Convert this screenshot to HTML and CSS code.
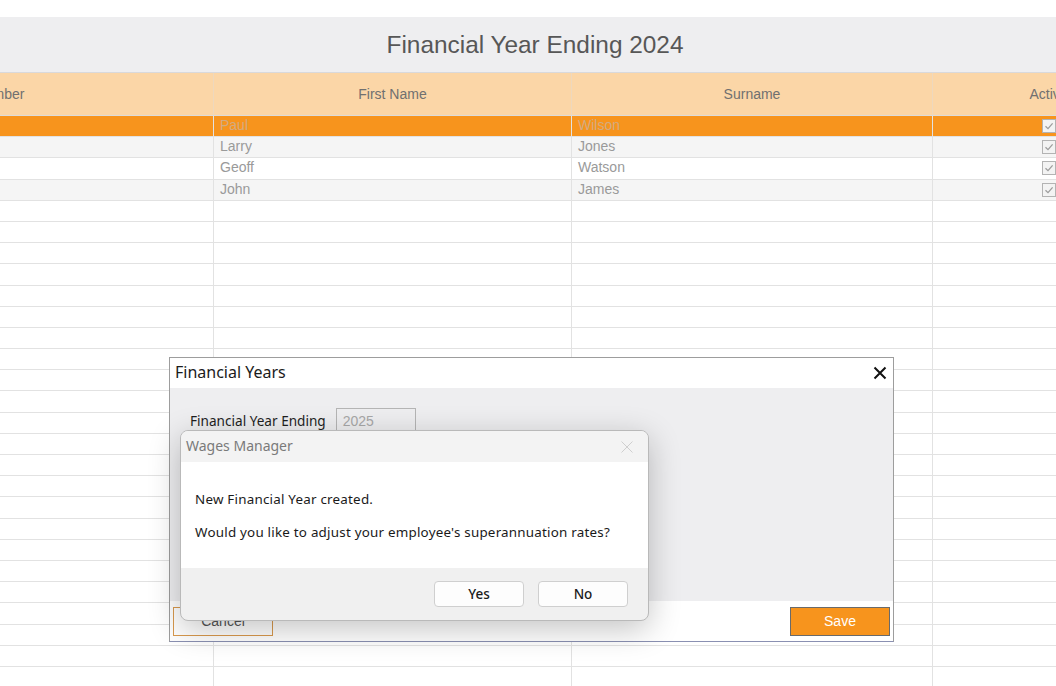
FILE: index.html
```html
<!DOCTYPE html>
<html>
<head>
<meta charset="utf-8">
<link rel="stylesheet" href="styles.css">
</head>
<body>
<div class="app">
  <div class="title-band">Financial Year Ending 2024</div>
  <div class="viewport">
    <div class="grid">
      <div class="row head">
        <div class="cell">Number</div>
        <div class="cell">First Name</div>
        <div class="cell">Surname</div>
        <div class="cell">Active</div>
      </div>
      <div class="row sel">
        <div class="cell"></div><div class="cell">Paul</div><div class="cell">Wilson</div><div class="cell chk"><span class="box"><svg viewBox="0 0 12 12"><path d="M2.5 6.2 L5 8.6 L9.6 3.4" /></svg></span></div>
      </div>
      <div class="row alt">
        <div class="cell"></div><div class="cell">Larry</div><div class="cell">Jones</div><div class="cell chk"><span class="box"><svg viewBox="0 0 12 12"><path d="M2.5 6.2 L5 8.6 L9.6 3.4" /></svg></span></div>
      </div>
      <div class="row">
        <div class="cell"></div><div class="cell">Geoff</div><div class="cell">Watson</div><div class="cell chk"><span class="box"><svg viewBox="0 0 12 12"><path d="M2.5 6.2 L5 8.6 L9.6 3.4" /></svg></span></div>
      </div>
      <div class="row alt">
        <div class="cell"></div><div class="cell">John</div><div class="cell">James</div><div class="cell chk"><span class="box"><svg viewBox="0 0 12 12"><path d="M2.5 6.2 L5 8.6 L9.6 3.4" /></svg></span></div>
      </div>
      <div class="row"><div class="cell"></div><div class="cell"></div><div class="cell"></div><div class="cell"></div></div>
      <div class="row"><div class="cell"></div><div class="cell"></div><div class="cell"></div><div class="cell"></div></div>
      <div class="row"><div class="cell"></div><div class="cell"></div><div class="cell"></div><div class="cell"></div></div>
      <div class="row"><div class="cell"></div><div class="cell"></div><div class="cell"></div><div class="cell"></div></div>
      <div class="row"><div class="cell"></div><div class="cell"></div><div class="cell"></div><div class="cell"></div></div>
      <div class="row"><div class="cell"></div><div class="cell"></div><div class="cell"></div><div class="cell"></div></div>
      <div class="row"><div class="cell"></div><div class="cell"></div><div class="cell"></div><div class="cell"></div></div>
      <div class="row"><div class="cell"></div><div class="cell"></div><div class="cell"></div><div class="cell"></div></div>
      <div class="row"><div class="cell"></div><div class="cell"></div><div class="cell"></div><div class="cell"></div></div>
      <div class="row"><div class="cell"></div><div class="cell"></div><div class="cell"></div><div class="cell"></div></div>
      <div class="row"><div class="cell"></div><div class="cell"></div><div class="cell"></div><div class="cell"></div></div>
      <div class="row"><div class="cell"></div><div class="cell"></div><div class="cell"></div><div class="cell"></div></div>
      <div class="row"><div class="cell"></div><div class="cell"></div><div class="cell"></div><div class="cell"></div></div>
      <div class="row"><div class="cell"></div><div class="cell"></div><div class="cell"></div><div class="cell"></div></div>
      <div class="row"><div class="cell"></div><div class="cell"></div><div class="cell"></div><div class="cell"></div></div>
      <div class="row"><div class="cell"></div><div class="cell"></div><div class="cell"></div><div class="cell"></div></div>
      <div class="row"><div class="cell"></div><div class="cell"></div><div class="cell"></div><div class="cell"></div></div>
      <div class="row"><div class="cell"></div><div class="cell"></div><div class="cell"></div><div class="cell"></div></div>
      <div class="row"><div class="cell"></div><div class="cell"></div><div class="cell"></div><div class="cell"></div></div>
      <div class="row"><div class="cell"></div><div class="cell"></div><div class="cell"></div><div class="cell"></div></div>
      <div class="row"><div class="cell"></div><div class="cell"></div><div class="cell"></div><div class="cell"></div></div>
      <div class="row"><div class="cell"></div><div class="cell"></div><div class="cell"></div><div class="cell"></div></div>
      <div class="row"><div class="cell"></div><div class="cell"></div><div class="cell"></div><div class="cell"></div></div>
      <div class="row"><div class="cell"></div><div class="cell"></div><div class="cell"></div><div class="cell"></div></div>
    </div>
  </div>

  <div class="dialog">
    <div class="dlg-title">
      <span>Financial Years</span>
      <svg class="dlg-close" viewBox="0 0 14 14"><path d="M1.5 1.5 L12.5 12.5 M12.5 1.5 L1.5 12.5"/></svg>
    </div>
    <div class="dlg-body">
      <div class="field">
        <span class="field-label">Financial Year Ending</span>
        <span class="field-input">2025</span>
      </div>
    </div>
    <div class="dlg-foot">
      <button class="btn-cancel">Cancel</button>
      <button class="btn-save">Save</button>
    </div>
  </div>

  <div class="msgbox">
    <div class="msg-title">
      <span>Wages Manager</span>
      <svg class="msg-close" viewBox="0 0 12 12"><path d="M0.5 0.5 L11.5 11.5 M11.5 0.5 L0.5 11.5"/></svg>
    </div>
    <div class="msg-content">
      <p>New Financial Year created.</p>
      <p>Would you like to adjust your employee's superannuation rates?</p>
    </div>
    <div class="msg-foot">
      <button class="msg-btn">Yes</button>
      <button class="msg-btn">No</button>
    </div>
  </div>
</div>
</body>
</html>
```

FILE: styles.css
```css
html, body {
  margin: 0;
  padding: 0;
}
body {
  width: 1056px;
  height: 686px;
  overflow: hidden;
  background: #ffffff;
  font-family: "Liberation Sans", Arial, sans-serif;
}
.app {
  position: relative;
  width: 1056px;
  height: 686px;
  padding-top: 17px;
  box-sizing: border-box;
}
.title-band {
  height: 55px;
  background: #eeeef0;
  border-bottom: 1px solid #d9d9db;
  display: flex;
  align-items: center;
  justify-content: center;
  font-size: 24.4px;
  color: #575757;
  padding-left: 14px;
}
.viewport {
  overflow: hidden;
  width: 1056px;
}
.grid {
  margin-left: -214px;
  width: 1383px;
  display: flex;
  flex-direction: column;
}
.row {
  display: grid;
  grid-template-columns: 428px 358px 361px 236px;
  height: 21.2px;
  box-sizing: border-box;
  border-bottom: 1.5px solid #e2e2e2;
  background: #ffffff;
}
.row .cell {
  border-right: 1.5px solid #e2e2e2;
  font-size: 14px;
  color: #9a9a9a;
  padding-left: 6px;
  line-height: 19px;
  white-space: nowrap;
  overflow: hidden;
}
.row.head {
  height: 43px;
  background: #fbd6a7;
  border-bottom: 1.5px solid #dcdcdc;
}
.row.head .cell {
  border-right: 1.5px solid #eed8bd;
  text-align: center;
  padding-left: 0;
  line-height: 43px;
  color: #707070;
}
.row.head .cell:last-child {
  text-indent: -4px;
}
.row.sel {
  background: #f7941d;
}
.row.sel .cell {
  color: #d2ab80;
}
.row.alt {
  background: #f5f5f5;
}
.cell.chk {
  display: flex;
  align-items: center;
  justify-content: center;
  padding-left: 0;
}
.box {
  width: 12px;
  height: 12px;
  border: 1px solid #b3b3b3;
  background: #f3f3f3;
  display: flex;
  margin-left: -3px;
}
.box svg {
  width: 12px;
  height: 12px;
  fill: none;
  stroke: #9c9c9c;
  stroke-width: 1.3;
}

/* Financial Years dialog */
.dialog {
  position: absolute;
  left: 169px;
  top: 357px;
  width: 725px;
  height: 285px;
  box-sizing: border-box;
  border: 1px solid #9d9d9d;
  border-bottom-color: #8a90b2;
  background: #ffffff;
  display: flex;
  flex-direction: column;
}
.dlg-title {
  height: 30px;
  display: flex;
  align-items: center;
  justify-content: space-between;
  padding: 0 6px 0 5px;
  font-family: "Noto Sans", "Open Sans", sans-serif;
  font-size: 16px;
  color: #1b1b1b;
  background: #ffffff;
}
.dlg-title span {
  margin-top: -2px;
}
.dlg-close {
  width: 14px;
  height: 14px;
  fill: none;
  stroke: #111111;
  stroke-width: 2;
}
.dlg-body {
  flex: 1;
  background: #eeeef0;
  padding: 20px 20px;
}
.field {
  display: flex;
  align-items: center;
  gap: 10px;
}
.field-label {
  font-family: "Noto Sans", "Open Sans", sans-serif;
  font-size: 13.6px;
  color: #1e1e1e;
}
.field-input {
  width: 72px;
  height: 22px;
  border: 1px solid #b5b5b5;
  background: #eeeef0;
  padding-left: 6px;
  font-size: 14px;
  color: #a8a8a8;
  line-height: 24px;
}
.dlg-foot {
  height: 40px;
  display: flex;
  align-items: center;
  justify-content: space-between;
  padding: 0 3px 0 3px;
  background: #ffffff;
}
.btn-cancel {
  width: 100px;
  height: 29px;
  border: 1.5px solid #d99a4e;
  background: #ffffff;
  font-family: "Liberation Sans", Arial, sans-serif;
  font-size: 14px;
  color: #555555;
}
.btn-save {
  width: 100px;
  height: 29px;
  border: 1.5px solid #6a6a6a;
  background: #f7941d;
  font-family: "Liberation Sans", Arial, sans-serif;
  font-size: 14px;
  color: #ffffff;
}

/* Wages Manager message box */
.msgbox {
  position: absolute;
  left: 180px;
  top: 430px;
  width: 469px;
  height: 191px;
  box-sizing: border-box;
  border: 1px solid #b9b9b9;
  border-radius: 8px;
  overflow: hidden;
  background: #f0f0f0;
  box-shadow: 0 8px 32px rgba(0, 0, 0, 0.24);
  display: flex;
  flex-direction: column;
  font-family: "Noto Sans", "Open Sans", sans-serif;
}
.msg-title {
  height: 31px;
  background: #f3f3f3;
  display: flex;
  align-items: center;
  justify-content: space-between;
  padding: 0 15px 0 5px;
  font-size: 14px;
  color: #7a7a7a;
}
.msg-title span {
  margin-top: -2px;
}
.msg-close {
  width: 12px;
  height: 12px;
  fill: none;
  stroke: #cfcfcf;
  stroke-width: 1;
}
.msg-content {
  height: 106px;
  box-sizing: border-box;
  background: #ffffff;
  padding: 28px 14px 0 14px;
  font-size: 13.4px;
  letter-spacing: 0.22px;
  color: #1a1a1a;
}
.msg-content p {
  margin: 0 0 15px 0;
  line-height: 18px;
}
.msg-foot {
  flex: 1;
  display: flex;
  justify-content: flex-end;
  align-items: flex-start;
  gap: 14px;
  padding: 13px 20px 0 0;
}
.msg-btn {
  width: 90px;
  height: 26px;
  border: 1px solid #cfcfcf;
  border-radius: 4px;
  background: #fdfdfd;
  font-family: "Noto Sans", "Open Sans", sans-serif;
  font-size: 13.5px;
  font-weight: 500;
  color: #1a1a1a;
  padding: 0;
}
```
